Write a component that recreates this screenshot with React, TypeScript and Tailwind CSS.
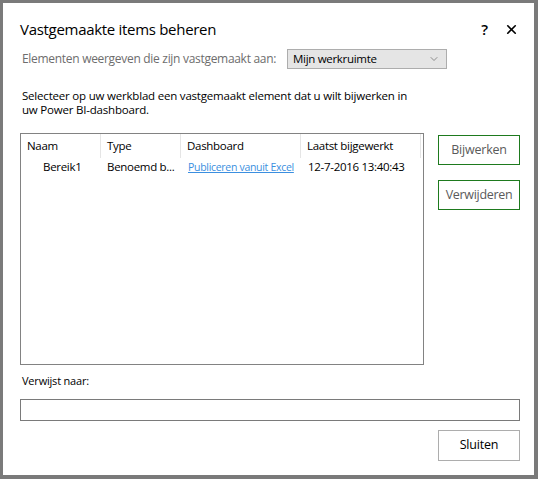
import { ChevronDown, X } from "lucide-react";

const columns = [
  { label: "Naam", width: "w-[80px]" },
  { label: "Type", width: "w-[80px]" },
  { label: "Dashboard", width: "w-[120px]" },
  { label: "Laatst bijgewerkt", width: "w-[120px]" },
];

export default function App() {
  return (
    <div className="h-[479px] w-[538px] overflow-hidden border-b-4 border-l-[3px] border-r-4 border-t-[3px] border-[#7a7a7a] bg-white font-['Open_Sans',sans-serif] text-black">
      <div className="flex h-full flex-col pl-[17px] pr-[14px] pt-[15px]">
        {/* Title bar */}
        <div className="flex h-[22px] items-center justify-between">
          <h1 className="text-[15px] leading-none tracking-[-0.3px]">Vastgemaakte items beheren</h1>
          <div className="mr-[1px] flex items-center gap-[16px]">
            <span className="text-[15px] font-semibold leading-none">?</span>
            <X className="h-[15px] w-[15px]" strokeWidth={2.6} />
          </div>
        </div>

        {/* Pinned-to selector */}
        <div className="mt-[9px] flex h-[20px] items-center">
          <span className="ml-[2px] text-[12px] tracking-[-0.3px] text-[#6d6d6d]">
            Elementen weergeven die zijn vastgemaakt aan:
          </span>
          <div className="ml-auto mr-[73px] flex h-[20px] w-[160px] items-center justify-between border border-[#adadad] bg-[#e5e5e5] pl-[5px] pr-[6px]">
            <span className="text-[11.5px] tracking-[-0.3px]">Mijn werkruimte</span>
            <ChevronDown className="h-[12px] w-[12px] text-[#666]" strokeWidth={1.4} />
          </div>
        </div>

        <p className="ml-[2px] mt-[20px] w-[400px] text-[11.5px] leading-[14px] tracking-[-0.2px]">
          Selecteer op uw werkblad een vastgemaakt element dat u wilt bijwerken in uw Power BI-dashboard.
        </p>

        {/* List + actions */}
        <div className="mt-[16px] flex items-start">
          <div className="h-[232px] w-[404px] whitespace-nowrap border border-[#828282] text-[11.5px] tracking-[-0.3px]">
            <div className="flex h-[24px]">
              {columns.map((c) => (
                <div
                  key={c.label}
                  className={`${c.width} flex items-center border-r border-[#e5e5e5] pl-[6px]`}
                >
                  {c.label}
                </div>
              ))}
            </div>
            <div className="flex h-[18px] items-center">
              <div className="w-[80px] pl-[22px]">Bereik1</div>
              <div className="w-[80px] pl-[6px]">Benoemd b...</div>
              <div className="w-[120px] overflow-hidden pl-[7px]">
                <span className="text-[10.5px] tracking-[-0.3px] text-[#3b8fe0] underline">Publiceren vanuit Excel</span>
              </div>
              <div className="w-[120px] pl-[7px]">12-7-2016 13:40:43</div>
            </div>
          </div>

          <div className="ml-[14px] mt-[2px] flex flex-col gap-[15px]">
            <button className="h-[30px] w-[82px] border border-[#1e7a1e] text-[12.5px] tracking-[-0.2px] text-[#5a5a5a]">
              Bijwerken
            </button>
            <button className="h-[30px] w-[82px] border border-[#1e7a1e] text-[12.5px] tracking-[-0.3px] text-[#5a5a5a]">
              Verwijderen
            </button>
          </div>
        </div>

        <span className="ml-[2px] mt-[9px] text-[11px] leading-[14px] tracking-[-0.2px]">Verwijst naar:</span>
        <div className="mt-[11px] h-[22px] w-[500px] border border-[#7a7a7a]" />

        <div className="mt-[9px] flex w-[500px] justify-end">
          <button className="h-[31px] w-[82px] border border-[#adadad] text-[12.5px] tracking-[-0.2px]">
            Sluiten
          </button>
        </div>
      </div>
    </div>
  );
}
